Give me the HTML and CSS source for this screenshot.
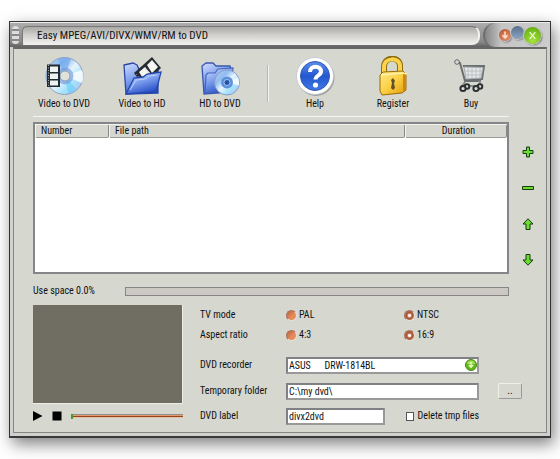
FILE: index.html
```html
<!DOCTYPE html>
<html lang="en">
<head>
<meta charset="utf-8">
<title>Easy MPEG/AVI/DIVX/WMV/RM to DVD</title>
<link rel="stylesheet" href="styles.css">
</head>
<body>
<svg class="defs" width="0" height="0" aria-hidden="true">
  <defs>
    <linearGradient id="disc" x1="0" y1="0" x2="1" y2="1"><stop offset="0" stop-color="#b9d4ee"/><stop offset=".3" stop-color="#8fbcf0"/><stop offset=".5" stop-color="#e8f4ff"/><stop offset=".7" stop-color="#a5e3fb"/><stop offset="1" stop-color="#b8b6ee"/></linearGradient>
    <linearGradient id="folder" x1="0" y1="0" x2=".5" y2="1"><stop offset="0" stop-color="#d3defc"/><stop offset=".5" stop-color="#7fa0ee"/><stop offset="1" stop-color="#2750c8"/></linearGradient>
    <linearGradient id="gold" x1="0" y1="0" x2="1" y2="1"><stop offset="0" stop-color="#ffe98a"/><stop offset=".5" stop-color="#fbd045"/><stop offset="1" stop-color="#e39a05"/></linearGradient>
    <linearGradient id="help" x1="0" y1="0" x2="0" y2="1"><stop offset="0" stop-color="#5b8df0"/><stop offset=".5" stop-color="#2457cf"/><stop offset="1" stop-color="#3f78e8"/></linearGradient>
  </defs>
</svg>
<div class="window">
  <header class="titlebar">
    <span class="grip"></span>
    <h1 class="caption">Easy MPEG/AVI/DIVX/WMV/RM to DVD</h1>
    <div class="controls">
      <button class="orb orb-min" aria-label="Minimize"><svg viewBox="0 0 12 12"><path d="M6 2.500v6M3.500 6.200 6 8.800l2.500-2.600" fill="none" stroke="#ffe0cc" stroke-width="1.500"/></svg></button>
      <button class="orb orb-max" aria-label="Maximize"></button>
      <button class="orb orb-close" aria-label="Close"><svg viewBox="0 0 18 18"><path d="m6 5.500 6 7M12 5.500l-6 7" fill="none" stroke="#efffd5" stroke-width="1.300"/></svg></button>
    </div>
  </header>
  <main class="content">
    <nav class="toolbar">
      <button class="tool"><svg viewBox="0 0 40 40"><circle cx="20.500" cy="20" r="18.500" fill="url(#disc)" stroke="#8ea2bd"/><path d="M21 20 14 3a18 18 0 0 1 13 0z" fill="#6ea8ee" opacity=".65"/><path d="m21 20 17-6a18 18 0 0 1 0 13z" fill="#fff" opacity=".8"/><path d="m21 20 12 14a18 18 0 0 1-9 4z" fill="#59c9f5" opacity=".5"/><circle cx="21" cy="20" r="8.500" fill="#7199dd" opacity=".65"/><circle cx="21" cy="20" r="5" fill="#e1e2d9" stroke="#8f9fad"/><path d="M3 8.500h13v22.500H3z" fill="#222b31"/><path d="M6 10.500h8v5.500H6zM6 17.500h8V23H6zM6 24.500h8v5H6z" fill="#eef2f3"/><path d="M4.500 9v22" stroke="#a4abac" stroke-dasharray="1 1.500"/></svg>Video to DVD</button>
      <button class="tool"><svg viewBox="0 0 40 40"><path d="m2 9 9-2 4 2 2 4 19 1v23L4 38z" fill="url(#folder)" stroke="#2947a7" stroke-width="1.300"/><path d="m12 17 18-16 9 11-18 17z" fill="#252c31"/><path d="m17 16 6-5 6 7-7 6zM25 9l5-5 6 7-6 6z" fill="#f5f6f2"/><path d="m14 18 9 10M20 9l10 11" stroke="#9a9ea0" stroke-dasharray="1 2"/><path d="m4 38 8-16 9-1 4-3 14-2-5 20z" fill="url(#folder)" stroke="#2446ae" stroke-width="1.300"/><path d="m8 34 6-10 9-1 4-3 8-1" fill="none" stroke="#bfd0fb"/></svg>Video to HD</button>
      <button class="tool"><svg viewBox="0 0 40 40"><path d="m2 10 4-3h7l3 3h14l2 6v20L4 38z" fill="url(#folder)" stroke="#3858ae" stroke-width="1.300"/><path d="m5 37 1-18 2-2h7l3-4 15-1-2 22z" fill="url(#folder)" stroke="#4566bf" stroke-width="1.200"/><circle cx="27" cy="26.500" r="12.500" fill="url(#disc)" stroke="#859fcb"/><path d="m27 26.500 11-5a12 12 0 0 1 1 8z" fill="#fff" opacity=".8"/><circle cx="27" cy="26.500" r="6" fill="#5e91dc"/><circle cx="27" cy="26.500" r="3" fill="#2253a6" stroke="#a4c8f2"/></svg>HD to DVD</button>
      <span class="divider"></span>
      <button class="tool"><svg viewBox="0 0 40 40"><circle cx="21" cy="21.500" r="18.500" fill="#777c77" opacity=".6"/><circle cx="20" cy="20" r="18.500" fill="#fff" stroke="#bcc7d9" stroke-width=".8"/><circle cx="20" cy="20" r="14.500" fill="url(#help)" stroke="#3159a9"/><path d="M15 16c0-7 11-7 11-.5 0 4-5.500 4-5.500 8" fill="none" stroke="#fff" stroke-width="4"/><circle cx="20.500" cy="29" r="2.600" fill="#fff"/></svg>Help</button>
      <button class="tool"><svg viewBox="0 0 40 40"><path d="M11 18v-7c0-11 16-11 16-1v8" fill="none" stroke="#8e6b0c" stroke-width="6"/><path d="M11 18v-7c0-10 16-10 16-1v8" fill="none" stroke="#fbd34c" stroke-width="4"/><path d="m7 19 3-3 20-1 3 3v16l-4 3-20 2-2-4z" fill="url(#gold)" stroke="#996d09"/><path d="m8 19 21-2 5 1" fill="none" stroke="#fff2ab" stroke-width="1.500"/><path d="m30 18 2.500.5V34L30 36z" fill="#cf870a"/><path d="m20 22 2 3-1 2 1 5-2 2-2-2 1-5-1-3z" fill="#645226"/></svg>Register</button>
      <button class="tool"><svg viewBox="0 0 40 40"><path d="m6 6 3 1 5 18h16M12 10h21l-2 13-18 1" fill="none" stroke="#6a6f70" stroke-width="2"/><path d="m13 11 19 .5L30 22l-15 1z" fill="#e4e6e8" stroke="#a5aaac"/><path d="M17 12v10m4-10v10m4-10v10m4-10v10M13 15h18m-17 4h16" stroke="#b4babe" stroke-width=".8"/><circle cx="6" cy="6" r="2.300" fill="#d8d8d8" stroke="#64696a"/><path d="m14 26-3 4h19l-2-5" fill="none" stroke="#8a8f90" stroke-width="2"/><g fill="#dedfe0" stroke="#2d3031" stroke-width="2"><circle cx="16" cy="30.500" r="2.300"/><circle cx="29" cy="30.500" r="2.300"/><circle cx="12" cy="32.500" r="2.600"/><circle cx="25" cy="32.500" r="2.600"/></g></svg>Buy</button>
    </nav>
    <div class="files">
      <div class="filelist">
        <table>
          <thead><tr><th class="col-number">Number</th><th class="col-path">File path</th><th class="col-duration">Duration</th></tr></thead>
          <tbody></tbody>
        </table>
      </div>
      <div class="order">
        <button aria-label="Add"><svg viewBox="0 0 12 12"><path d="M4.500 1h3v3.500H11v3H7.500V11h-3V7.500H1v-3h3.500z"/></svg></button>
        <button aria-label="Remove"><svg viewBox="0 0 12 12"><path d="M.5 4.500h11v3H.5z"/></svg></button>
        <button aria-label="Move up"><svg viewBox="0 0 12 12"><path d="M6 .8 11 6H8v5.500H4V6H1z"/></svg></button>
        <button aria-label="Move down"><svg viewBox="0 0 12 12"><path d="M6 11.200 1 6h3V.5h4V6h3z"/></svg></button>
      </div>
    </div>
    <div class="space">
      <label for="space">Use space 0.0%</label>
      <progress id="space" value="0" max="100"></progress>
    </div>
    <div class="bottom">
      <section class="player">
        <div class="screen"></div>
        <div class="transport">
          <button aria-label="Play"><svg viewBox="0 0 10 10"><path d="M0 0v10l9.500-5z"/></svg></button>
          <button aria-label="Stop"><svg viewBox="0 0 10 10"><path d="M.5.5h9v9h-9z"/></svg></button>
          <input class="seek" type="range" min="0" max="100" value="0" aria-label="Position">
        </div>
      </section>
      <form class="settings">
        <div class="row option" role="radiogroup" aria-labelledby="tv">
          <span id="tv">TV mode</span>
          <label class="choice"><input type="radio" name="tv">PAL</label>
          <label class="choice"><input type="radio" name="tv" checked>NTSC</label>
        </div>
        <div class="row option" role="radiogroup" aria-labelledby="aspect">
          <span id="aspect">Aspect ratio</span>
          <label class="choice"><input type="radio" name="aspect">4:3</label>
          <label class="choice"><input type="radio" name="aspect" checked>16:9</label>
        </div>
        <div class="row first-field">
          <label for="recorder">DVD recorder</label>
          <div class="picker wide">
            <select id="recorder" class="field"><option>ASUS&nbsp;&nbsp;&nbsp;&nbsp;&nbsp; DRW-1814BL</option></select>
            <svg class="picker-mark" viewBox="0 0 12 12"><circle cx="6" cy="6" r="5.500" fill="#62b915" stroke="#4c8a17"/><path d="M2 5a4 3.500 0 0 1 8 0z" fill="#a5e05a"/><path d="M6 3v5M3.800 6 6 8.300 8.200 6" fill="none" stroke="#efffcf" stroke-width="1.300"/></svg>
          </div>
        </div>
        <div class="row">
          <label for="temp">Temporary folder</label>
          <input id="temp" class="field wide" type="text" value="C:\my dvd\">
          <button class="browse" type="button">..</button>
        </div>
        <div class="row last">
          <label for="label">DVD label</label>
          <input id="label" class="field short" type="text" value="divx2dvd">
          <label class="choice delete"><input type="checkbox">Delete tmp files</label>
        </div>
      </form>
    </div>
  </main>
</div>
</body>
</html>
```
FILE: styles.css
```css
* { box-sizing: border-box; }
body {
  margin: 0;
  background: #fff;
  color: #111;
  font: 10px/14px "Roboto Condensed", Roboto, "Liberation Sans", sans-serif;
}
button, input, select { font: inherit; color: inherit; margin: 0; }
button { padding: 0; border: 0; background: none; }
svg { display: block; }
.defs { position: absolute; }

.window {
  margin: 21px 9px;
  border: 1px solid #333;
  border-bottom: 2px solid #39393b;
  background: #d0d0cc;
  box-shadow: 3px 6px 15px 0 rgba(0, 0, 0, .5);
}

.titlebar {
  display: flex;
  align-items: stretch;
  height: 25px;
  border-top: 1px solid #eee;
  background: linear-gradient(#adadad, #999 40%, #888 80%, #606060);
}
.grip {
  width: 7px;
  margin: 3px 3px 3px 2px;
  border-radius: 4px;
  background: repeating-linear-gradient(#ddd 0 3px, #888 3px 5px);
}
.caption {
  flex: 1;
  margin: 3px 0 2px;
  padding-left: 14px;
  border: 1px solid #777;
  border-bottom-color: #eee;
  border-right: 2px solid #f1f1f1;
  border-radius: 5px 8px 8px 2px;
  background: linear-gradient(#aaa9a7, #d3d1cd 50%, #f1efec);
  font: 11px/18px "Roboto Condensed", Roboto, "Liberation Sans", sans-serif;
}
.controls {
  display: flex;
  align-items: center;
  width: 67px;
  margin-left: 3px;
  padding-left: 14px;
  border-left: 2px solid #6e6e6e;
  border-radius: 12px 0 0 12px;
  background: linear-gradient(90deg, #858585, #c5c5c5 25%, #ccc);
}
.orb {
  width: 12px;
  height: 12px;
  border-radius: 50%;
  box-shadow: 0 0 0 1px #c9c9c9, 1px 1px 2px #444;
}
.orb-min { background: radial-gradient(circle at 60% 70%, #ec956c, #a44e2a); }
.orb-max {
  width: 13px;
  height: 13px;
  margin-bottom: 5px;
  background: linear-gradient(#59708b, #8ba5c0);
}
.orb-close {
  width: 17px;
  height: 17px;
  background: radial-gradient(circle at 50% 80%, #a6e23e, #5ca60c);
}

.content {
  margin: 0 3px 3px;
  padding: 7px 0 4px 19px;
  border: 1px solid #858585;
  border-top: 2px solid #666;
  background: #d6d7cf;
}

.toolbar {
  display: grid;
  grid-template-columns: repeat(3, 1fr) 17px repeat(3, 1fr);
  margin: 0 36px 0 -8px;
  padding-bottom: 5px;
}
.tool {
  display: flex;
  flex-direction: column;
  align-items: center;
  gap: 1px;
}
.tool svg { width: 40px; height: 40px; }
.divider {
  justify-self: center;
  width: 2px;
  height: 37px;
  margin-top: 9px;
  border-left: 1px solid #b6b7b0;
  border-right: 1px solid #f4f4ef;
}

.files { display: grid; grid-template-columns: 1fr 37px; }
.filelist {
  display: grid;
  height: 158px;
  padding-top: 5px;
  border-top: 1px solid #f5f5f0;
}
.filelist table {
  width: 100%;
  border: 2px solid #85868a;
  border-spacing: 0;
  table-layout: fixed;
  background: #fff;
}
.filelist thead { vertical-align: top; }
.filelist th {
  height: 14px;
  padding: 0 0 0 5px;
  border: 1px solid #f2f2ee;
  border-right-color: #888;
  border-bottom-color: #999;
  border-radius: 2px;
  background: #d6d7cf;
  font-weight: normal;
  line-height: 12px;
  text-align: left;
}
.filelist .col-number { width: 74px; }
.filelist .col-duration { width: 102px; text-align: center; }
.order {
  display: flex;
  flex-direction: column;
  align-items: center;
  gap: 24px;
  padding-top: 30px;
}
.order svg {
  width: 12px;
  height: 12px;
  fill: #6bdc32;
  stroke: #173b0c;
}

.space {
  display: grid;
  grid-template-columns: 92px 1fr;
  align-items: center;
  margin: 10px 37px 7px 0;
}
progress {
  width: 100%;
  height: 9px;
  border: 1px solid #858585;
  background: #ccc8c4;
  appearance: none;
}
progress::-webkit-progress-bar { background: #ccc8c4; }

.bottom {
  display: grid;
  grid-template-columns: 150px 1fr;
  gap: 17px;
  margin-right: 24px;
}
.screen {
  height: 99px;
  border-right: 1px solid #eceee6;
  border-bottom: 1px solid #eceee6;
  background: #706e62;
}
.transport {
  display: flex;
  align-items: center;
  gap: 9px;
  height: 24px;
}
.transport svg { width: 10px; height: 10px; }
.seek {
  flex: 1;
  min-width: 0;
  height: 4px;
  border-top: 1px solid #90918a;
  background: linear-gradient(#e69a73 0 1px, #9b4218 1px 2px, #ddc3ad 2px);
  appearance: none;
}
.seek::-webkit-slider-thumb {
  width: 2px;
  height: 5px;
  background: #4c9b23;
  appearance: none;
}

.row {
  display: grid;
  grid-template-columns: 86px minmax(0, 118fr) minmax(0, 75fr) 43px;
  align-items: center;
  height: 26px;
}
.option { height: 20px; }
.first-field { margin-top: 7px; }
.last { height: 24px; }
.wide { grid-column: 2 / 4; }
.short { width: 84%; }
.choice {
  display: flex;
  align-items: center;
  gap: 2px;
  white-space: nowrap;
}
input[type="radio"] {
  width: 11px;
  height: 11px;
  border: 1px solid #a8715c;
  border-right-color: #e8ded2;
  border-bottom-color: #e8ded2;
  border-radius: 50%;
  background: linear-gradient(135deg, #b9653f, #e78b5b 60%);
  appearance: none;
}
input[type="radio"]:checked {
  background: radial-gradient(circle, #fff 0 1px, #c98467 2px, #b0542f 3px, #a9694f 4px);
}
input[type="checkbox"] {
  width: 9px;
  height: 9px;
  border: 1px solid #555;
  background: #fff;
  appearance: none;
}
.delete { gap: 4px; padding-left: 2px; }
.field {
  height: 17px;
  min-width: 0;
  padding: 0 1px;
  border: 2px solid #808185;
  border-right-color: #999;
  border-bottom-color: #999;
  border-radius: 0;
  background: #fff;
  appearance: none;
}
.picker { display: grid; align-items: center; }
.picker .field, .picker-mark { grid-area: 1 / 1; }
.picker-mark {
  justify-self: end;
  width: 12px;
  height: 12px;
  margin-right: 2px;
  pointer-events: none;
}
.browse {
  justify-self: end;
  width: 24px;
  height: 16px;
  border: 1px solid #f0f0e9;
  border-right-color: #999;
  border-bottom-color: #999;
  border-radius: 2px;
}
```
